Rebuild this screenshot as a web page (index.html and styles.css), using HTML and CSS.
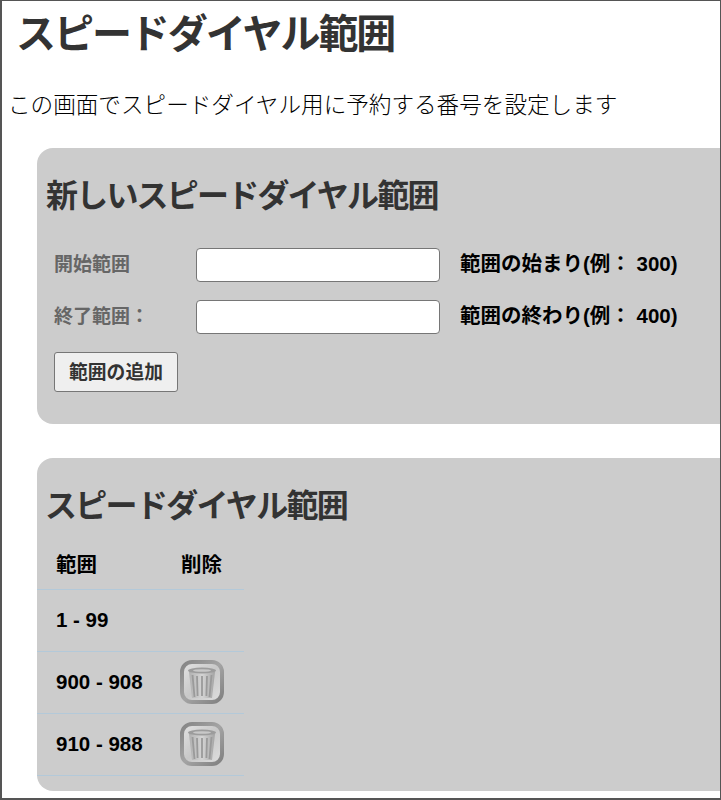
FILE: index.html
```html
<!DOCTYPE html>
<html lang="ja">
<head>
<meta charset="utf-8">
<title>スピードダイヤル範囲</title>
<link rel="stylesheet" href="styles.css">
</head>
<body>
<div class="frame">
  <h1 class="title">スピードダイヤル範囲</h1>
  <p class="intro">この画面でスピードダイヤル用に予約する番号を設定します</p>
  <section class="panel panel-form">
    <h2 class="panel-title">新しいスピードダイヤル範囲</h2>
    <div class="form-row">
      <label class="field-label">開始範囲</label>
      <input class="field-input" type="text">
      <span class="hint">範囲の始まり(例： 300)</span>
    </div>
    <div class="form-row">
      <label class="field-label">終了範囲：</label>
      <input class="field-input" type="text">
      <span class="hint">範囲の終わり(例： 400)</span>
    </div>
    <button class="add-button" type="button">範囲の追加</button>
  </section>
  <section class="panel panel-table">
    <h2 class="panel-title">スピードダイヤル範囲</h2>
    <table class="ranges">
      <thead>
        <tr><th class="col-range">範囲</th><th class="col-del">削除</th></tr>
      </thead>
      <tbody>
        <tr><td class="col-range">1 - 99</td><td class="col-del"></td></tr>
        <tr>
          <td class="col-range">900 - 908</td>
          <td class="col-del">
            <svg class="trash" viewBox="0 0 44 44" width="44" height="44" aria-label="削除">
              <defs>
                <linearGradient id="ring" x1="0" y1="0" x2="1" y2="1"><stop offset="0" stop-color="#858585"/><stop offset="0.5" stop-color="#a4a4a4"/><stop offset="1" stop-color="#808080"/></linearGradient>
                <linearGradient id="face" x1="0" y1="0" x2="1" y2="1"><stop offset="0" stop-color="#e4e4e4"/><stop offset="0.5" stop-color="#c8c8c8"/><stop offset="1" stop-color="#e0e0e0"/></linearGradient>
                <linearGradient id="can" x1="0" y1="0" x2="1" y2="0"><stop offset="0" stop-color="#b0b0b0"/><stop offset="0.5" stop-color="#d4d4d4"/><stop offset="1" stop-color="#a4a4a4"/></linearGradient>
              </defs>
              <rect x="2" y="2" width="40" height="40" rx="10" fill="url(#face)" stroke="url(#ring)" stroke-width="4"/>
              <path d="M9 12 L35 12 L32 38 L12 38 Z" fill="url(#can)"/>
              <ellipse cx="22" cy="10.5" rx="14" ry="3" fill="#9c9c9c"/>
              <ellipse cx="22" cy="10.5" rx="9" ry="1.3" fill="#c8c8c8"/>
              <path d="M17 16 L17.6 36 M22 16 L22 36 M27 16 L26.4 36 M12.5 15 L14.5 37 M31.5 15 L29.5 37" stroke="#9a9a9a" stroke-width="1.8" fill="none"/>
            </svg>
          </td>
        </tr>
        <tr>
          <td class="col-range">910 - 988</td>
          <td class="col-del">
            <svg class="trash" viewBox="0 0 44 44" width="44" height="44" aria-label="削除">
              <rect x="2" y="2" width="40" height="40" rx="10" fill="url(#face)" stroke="url(#ring)" stroke-width="4"/>
              <path d="M9 12 L35 12 L32 38 L12 38 Z" fill="url(#can)"/>
              <ellipse cx="22" cy="10.5" rx="14" ry="3" fill="#9c9c9c"/>
              <ellipse cx="22" cy="10.5" rx="9" ry="1.3" fill="#c8c8c8"/>
              <path d="M17 16 L17.6 36 M22 16 L22 36 M27 16 L26.4 36 M12.5 15 L14.5 37 M31.5 15 L29.5 37" stroke="#9a9a9a" stroke-width="1.8" fill="none"/>
            </svg>
          </td>
        </tr>
      </tbody>
    </table>
  </section>
</div>
</body>
</html>
```
FILE: styles.css
```css
* { box-sizing: border-box; }
html, body { margin: 0; padding: 0; height: 100%; background: #fff; }
body {
  font-family: "Liberation Sans", "Noto Sans CJK JP", sans-serif;
  overflow: hidden;
}
.frame {
  width: 721px;
  height: 800px;
  border-style: solid;
  border-color: #555;
  border-width: 1px 1px 2px 2px;
  padding-left: 8px;
  overflow: hidden;
}
.title {
  margin: 0;
  padding: 8px 0 0 6px;
  height: 87px;
  font-size: 40px;
  line-height: 50px;
  font-weight: 700;
  letter-spacing: -2.05px;
  color: #333;
}
.intro {
  margin: 0 0 0 -2px;
  height: 60px;
  font-size: 22.6px;
  line-height: 36px;
  font-weight: 300;
  color: #000;
}
.panel {
  margin-left: 27px;
  width: 720px;
  background: #ccc;
  border-radius: 16px;
}
.panel-form {
  height: 276px;
  padding: 24px 10px 0;
  margin-bottom: 34px;
}
.panel-table {
  height: 333px;
  padding: 24px 0 0;
}
.panel-title {
  margin: 0 0 0 -1px;
  font-size: 32px;
  line-height: 48px;
  font-weight: 700;
  letter-spacing: -1.8px;
  color: #333;
}
.panel-form .panel-title { margin-bottom: 28px; }
.panel-table .panel-title { margin-left: 8px; letter-spacing: -1.7px; margin-bottom: 11px; }
.form-row {
  display: flex;
  align-items: center;
  height: 34px;
  margin-bottom: 18px;
  padding-left: 7px;
}
.field-label {
  width: 142px;
  padding-bottom: 1px;
  font-size: 19px;
  line-height: 28px;
  font-weight: 700;
  color: #666;
}
.field-input {
  width: 244px;
  height: 34px;
  margin: 0 20px 0 0;
  padding: 0 4px;
  background: #fff;
  border: 1px solid #767676;
  border-radius: 4px;
}
.hint {
  padding-bottom: 2px;
  font-size: 20.5px;
  line-height: 30px;
  font-weight: 700;
  color: #000;
  white-space: nowrap;
}
.add-button {
  display: block;
  width: 124px;
  height: 40px;
  margin: 0 0 0 7px;
  padding: 0 0 4px;
  background: #efefef;
  border: 1px solid #767676;
  border-radius: 3px;
  font: 700 18.8px "Liberation Sans", "Noto Sans CJK JP", sans-serif;
  color: #333;
}
.ranges {
  border-collapse: collapse;
  width: 207px;
  table-layout: fixed;
  font-size: 20.5px;
  color: #000;
}
.ranges th, .ranges td {
  border-bottom: 1px solid #b3c9d9;
  padding: 0;
  font-weight: 700;
  text-align: left;
}
.ranges th { height: 48px; padding-bottom: 4px; }
.ranges td { height: 62px; }
.col-range { width: 144px; padding-left: 19px !important; }
.col-del { width: 63px; }
.trash { display: block; margin: 0 0 1px -1px; filter: blur(0.5px); }
```
